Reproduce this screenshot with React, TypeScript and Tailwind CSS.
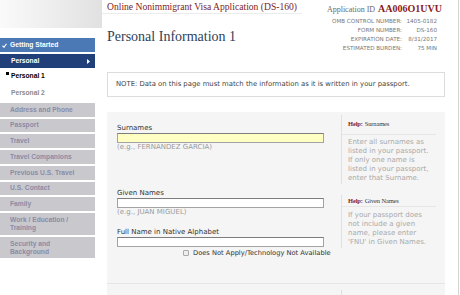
const serif = "font-['Liberation_Serif','Times_New_Roman',serif]";
const verdana = "font-['DejaVu_Sans',Verdana,sans-serif]";

const navItems = [
  { lines: ['Address and Phone'], h: 'h-[14px]' },
  { lines: ['Passport'], h: 'h-[13px]' },
  { lines: ['Travel'], h: 'h-[14px]' },
  { lines: ['Travel Companions'], h: 'h-[14px]' },
  { lines: ['Previous U.S. Travel'], h: 'h-[14px]' },
  { lines: ['U.S. Contact'], h: 'h-[13px]' },
  { lines: ['Family'], h: 'h-[14px]' },
  { lines: ['Work / Education /', 'Training'], h: 'h-[22px]' },
  { lines: ['Security and', 'Background'], h: 'h-[21px]' },
];

const meta = [
  ['OMB CONTROL NUMBER:', '1405-0182'],
  ['FORM NUMBER:', 'DS-160'],
  ['EXPIRATION DATE:', '8/31/2017'],
  ['ESTIMATED BURDEN:', '75 MIN'],
];

function Sidebar() {
  return (
    <aside className="w-[102px] shrink-0 flex flex-col">
      <div className="h-[28px] bg-linear-to-r from-[#fafafa] to-[#e1e1e1]" />
      <nav className="w-[95px] mt-[10px] flex flex-col font-['Liberation_Sans',Arial,sans-serif] font-bold text-[6.7px]">
        <div className="h-[14px] bg-[#4b79b6] text-white flex items-center pl-[2px] gap-[3px]">
          <svg width="5" height="5" viewBox="0 0 10 10">
            <path d="M1 5.5 L4 8.5 L9 1.5" stroke="white" strokeWidth="2.2" fill="none" />
          </svg>
          <span>Getting Started</span>
        </div>
        <div className="h-[14px] mt-[2px] bg-[#213f79] text-white flex items-center justify-between pl-[11px] pr-[5px]">
          <span>Personal</span>
          <svg width="3" height="5" viewBox="0 0 3 5">
            <path d="M0 0 L3 2.5 L0 5 Z" fill="white" />
          </svg>
        </div>
        <div className="h-[17px] flex items-center pl-[11px] text-black relative">
          <span className="absolute left-[6px] top-[4px] w-[2.5px] h-[2.5px] bg-black" />
          Personal 1
        </div>
        <div className="h-[17px] flex items-center pl-[11px] text-[#8a8a8a]">Personal 2</div>
        <div className="mt-[1px] flex flex-col gap-[2px]">
          {navItems.map((item) => (
            <div
              key={item.lines[0]}
              className={`${item.h} bg-[#c9c9cd] text-[#8b8ba6] pl-[10px] flex flex-col ${
                item.lines.length > 1 ? 'pt-[3px] leading-[7.5px]' : 'justify-center'
              }`}
            >
              {item.lines.map((l) => (
                <span key={l}>{l}</span>
              ))}
            </div>
          ))}
        </div>
      </nav>
    </aside>
  );
}

function HelpBlock({ title, text, titleH, mt }: { title: string; text: string; titleH: string; mt: string }) {
  return (
    <div className={`${mt} border-l border-[#e0e0e0]`}>
      <div className={`${titleH} w-[94px] border-b border-[#e6e6e6] flex items-center pl-[6px] ${serif} text-[6.5px] tracking-[-0.15px]`}>
        <span className="font-bold text-[#8a1c1c]">Help:</span>
        <span className="ml-[2px] text-[#3a3a3a]">{title}</span>
      </div>
      <p className={`pt-[3.5px] pb-[1px] pl-[6px] w-[90px] ${verdana} text-[7px] leading-[9px] text-[#a9a9a9]`}>{text}</p>
    </div>
  );
}

function Field({ label, example, yellow, className }: { label: string; example?: string; yellow?: boolean; className?: string }) {
  return (
    <div className={className}>
      <div className="text-[7px] leading-[9px] text-[#333]">{label}</div>
      <input
        type="text"
        readOnly
        className={`block w-[207px] h-[10px] border border-[#a3a3a3] border-t-[#7d7d7d] ${yellow ? 'bg-[#ffffc4]' : 'bg-white'}`}
      />
      {example && <div className="text-[7px] leading-[9px] text-[#9a9a9a]">{example}</div>}
    </div>
  );
}

export default function App() {
  return (
    <div className="w-[460px] h-[295px] overflow-hidden bg-white flex">
      <Sidebar />
      <main className="w-[357px] shrink-0 border-r border-[#d4d4d4] pl-[5px] pr-[13px] flex flex-col">
        <header className="h-[72px] flex justify-between items-start">
          <div className="flex flex-col">
            <div className={`-ml-[5px] pl-[5px] w-[200px] h-[14px] pt-[2px] border-b border-[#ececec] flex items-center ${serif} text-[9.6px] text-[#7b2424] whitespace-nowrap`}>
              Online Nonimmigrant Visa Application (DS-160)
            </div>
            <h1 className={`mt-[15px] ${serif} text-[14px] leading-[16px] text-[#2d3f5b]`}>Personal Information 1</h1>
          </div>
          <div className="flex flex-col items-end">
            <div className={`h-[14px] mr-[3px] flex items-baseline gap-[3px] pt-[1px] ${serif}`}>
              <span className="text-[8px] text-[#6a6a6a]">Application ID</span>
              <span className="text-[10px] font-bold text-[#8a1a1a]">AA006O1UVU</span>
            </div>
            <div className={`mt-[3px] mr-[8px] grid grid-cols-[auto_35px] ${verdana} text-[5.6px] leading-[9px] text-[#777]`}>
              {meta.map(([k, v]) => (
                <div key={k} className="contents">
                  <span className="text-right">{k}</span>
                  <span className="text-right">{v}</span>
                </div>
              ))}
            </div>
          </div>
        </header>

        <div className={`h-[25px] shrink-0 border border-[#dcdcdc] bg-white flex items-center pl-[8px] ${verdana} text-[6.85px] text-[#444] whitespace-nowrap`}>
          NOTE: Data on this page must match the information as it is written in your passport.
        </div>

        <section className="mt-[15px] flex-1 bg-[#f5f5f5] flex flex-col">
          <div className="h-[172px] shrink-0 flex border-b border-[#e5e5e5]">
            <div className={`w-[234px] shrink-0 pl-[10px] pt-[11.5px] ${verdana}`}>
              <Field label="Surnames" example="(e.g., FERNANDEZ GARCIA)" yellow />
              <Field label="Given Names" example="(e.g., JUAN MIGUEL)" className="mt-[37px]" />
              <div className="mt-[1px]" />
              <Field label="Full Name in Native Alphabet" className="mt-[11px]" />
              <div className="mt-[2px] h-[9px] pl-[66px] flex items-center gap-[4px] whitespace-nowrap">
                <span className="w-[6px] h-[6px] border border-[#ababab] rounded-[1px] bg-[#eeeeee]" />
                <span className="text-[6.7px] text-[#333]">Does Not Apply/Technology Not Available</span>
              </div>
            </div>
            <div className="w-[104px] shrink-0 flex flex-col">
              <HelpBlock
                mt="mt-[3px]"
                titleH="h-[19.5px]"
                title="Surnames"
                text="Enter all surnames as listed in your passport. If only one name is listed in your passport, enter that Surname."
              />
              <HelpBlock
                mt="mt-[11px]"
                titleH="h-[12px]"
                title="Given Names"
                text="If your passport does not include a given name, please enter 'FNU' in Given Names."
              />
            </div>
          </div>
          <div className="flex-1 flex">
            <div className="w-[234px] shrink-0" />
            <div className="w-[104px] mt-[6px] border-l border-[#e0e0e0]" />
          </div>
        </section>
      </main>
    </div>
  );
}
